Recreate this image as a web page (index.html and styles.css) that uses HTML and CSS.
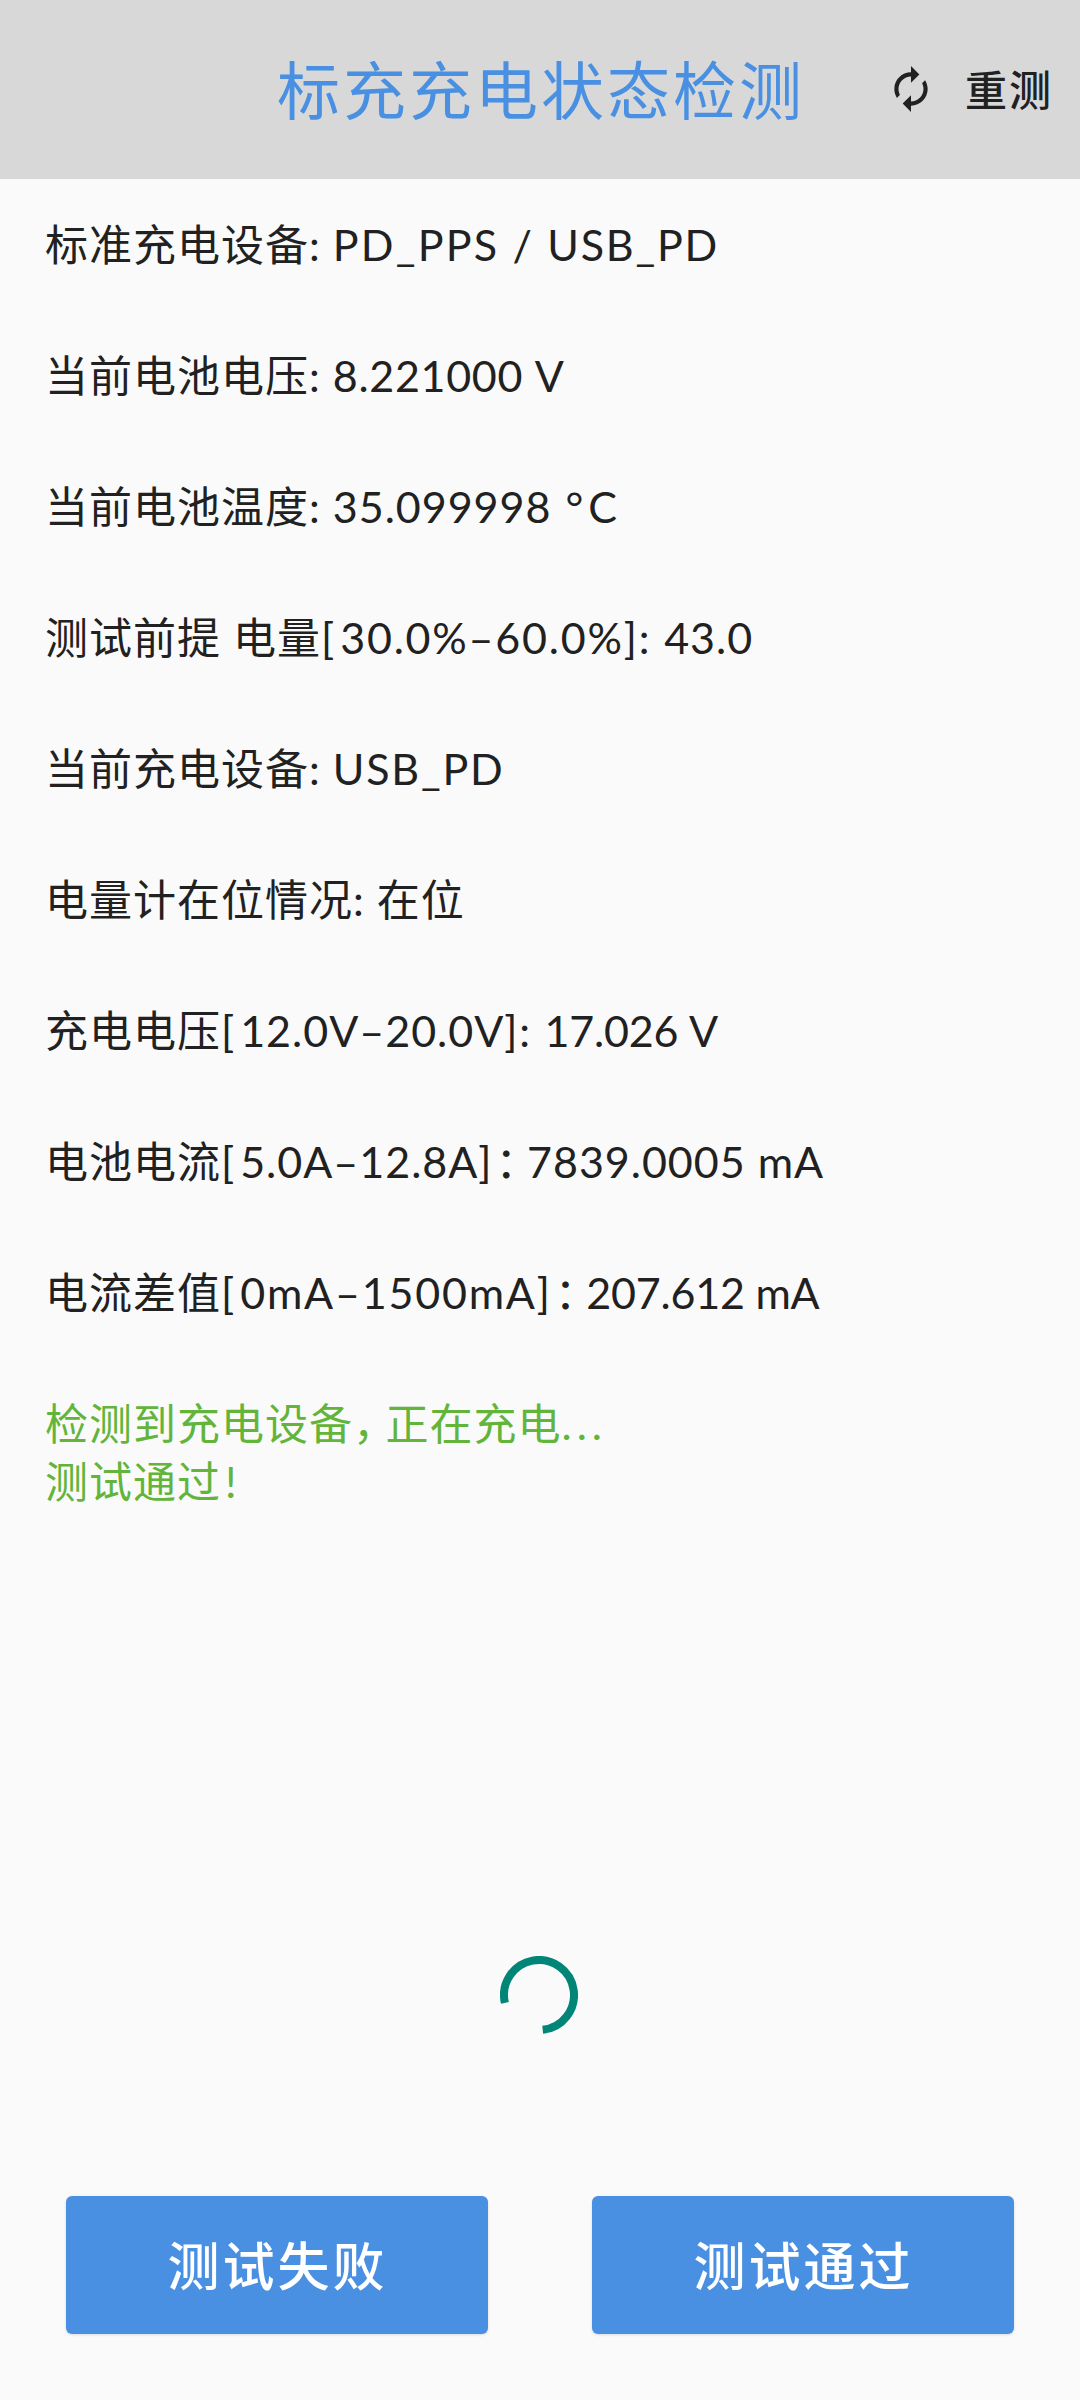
FILE: index.html
```html
<!DOCTYPE html>
<html lang="zh-CN">
<head>
  <meta charset="UTF-8">
  <title>标充充电状态检测</title>
  <link rel="stylesheet" href="styles.css">
</head>
<body>
  <header class="header">
    <h1 class="title">标充充电状态检测</h1>
    <button class="retest">
      <svg class="retest-icon" viewBox="0 0 24 24" fill="currentColor">
        <path d="M12 6v3l4-4-4-4v3c-4.42 0-8 3.58-8 8 0 1.57.46 3.03 1.24 4.26L6.7 14.8c-.45-.83-.7-1.79-.7-2.8 0-3.31 2.69-6 6-6zm6.76 1.74L17.3 9.2c.44.84.7 1.79.7 2.8 0 3.31-2.69 6-6 6v-3l-4 4 4 4v-3c4.42 0 8-3.58 8-8 0-1.57-.46-3.03-1.24-4.26z"/>
      </svg>
      <span>重测</span>
    </button>
  </header>

  <main class="content">
    <p class="row">标准充电设备: <span class="wider">PD_PPS / </span><span class="wide">USB_PD</span></p>
    <p class="row">当前电池电压: <span class="snug">8.221000 V</span></p>
    <p class="row">当前电池温度: 35.099998 <span class="unit">°C</span></p>
    <p class="row">测试前提 电量<span class="bracket">[</span><span class="wide">30.0%–60.0%]: </span>43.0</p>
    <p class="row">当前充电设备: <span class="wide">USB_PD</span></p>
    <p class="row">电量计在位情况: 在位</p>
    <p class="row">充电电压<span class="bracket">[</span>12.0V–20.0V<span class="wide">]: </span><span class="tight">17.026 V</span></p>
    <p class="row">电池电流<span class="bracket">[</span>5.0A–12.8A]<span class="colon">：</span>7839.0005 mA</p>
    <p class="row">电流差值<span class="bracket">[</span><span class="wide">0mA–1500mA]</span><span class="colon">：</span><span class="tight">207.612 mA</span></p>
    <p class="result">检测到充电设备<span class="comma">，</span>正在充电<span class="dots">...</span><br>测试通过<span class="bang">!</span></p>
  </main>

  <div class="loading">
    <svg class="spinner" viewBox="0 0 78 78">
      <path d="M4.9 46.9A35 35 0 1 1 42.7 73.8"/>
    </svg>
  </div>

  <footer class="actions">
    <button class="btn">测试失败</button>
    <button class="btn">测试通过</button>
  </footer>
</body>
</html>
```

FILE: styles.css
```css
* {
  box-sizing: border-box;
}

body {
  margin: 0;
  width: 1080px;
  height: 2400px;
  display: flex;
  flex-direction: column;
  background-color: #fafafa;
  color: #212121;
  font-family: Lato, "Noto Sans CJK SC", sans-serif;
}

button {
  border: none;
  font-family: inherit;
  font-weight: 500;
}

.header {
  display: grid;
  grid-template-columns: 1fr auto 1fr;
  align-items: center;
  height: 179px;
  padding: 0 0 4px 2px;
  background-color: #d8d8d8;
}

.title {
  grid-column: 2;
  margin: 0;
  padding-bottom: 2px;
  font-size: 63px;
  font-weight: 400;
  letter-spacing: 3px;
  color: #4a90e2;
}

.retest {
  justify-self: end;
  display: flex;
  align-items: center;
  gap: 29px;
  padding: 0 27px 0 0;
  background: none;
  color: #212121;
  font-size: 42px;
  letter-spacing: 2px;
}

.retest-icon {
  width: 50px;
  height: 50px;
  margin-top: 3px;
}

.content {
  height: 1731px;
  padding: 37px 45px 0;
  font-size: 43px;
  letter-spacing: 1px;
  line-height: 58px;
}

.row {
  margin: 0 0 73px;
  white-space: nowrap;
}

.tight {
  letter-spacing: -0.2px;
}

.snug {
  letter-spacing: 0.7px;
}

.wide {
  letter-spacing: 1.8px;
}

.wider {
  letter-spacing: 2.2px;
}

.bracket {
  letter-spacing: 6px;
}

.unit {
  padding-left: 2px;
  letter-spacing: 5px;
}

/* half-width forms of the full-width punctuation */
.colon,
.comma {
  font-feature-settings: "halt";
}

.colon {
  padding: 0 9px 0 3px;
}

.comma {
  padding-right: 10px;
}

.dots {
  letter-spacing: 5px;
}

.bang {
  padding-left: 4px;
}

.result {
  margin: 0;
  color: #62b53a;
}

.loading {
  display: flex;
  justify-content: center;
  height: 286px;
  padding: 46px 2px 0 0;
}

.spinner {
  width: 78px;
  height: 78px;
  fill: none;
  stroke: #008577;
  stroke-width: 8;
}

.actions {
  display: flex;
  justify-content: space-between;
  padding: 0 66px;
}

.btn {
  width: 422px;
  height: 138px;
  padding: 0 0 3px 1px;
  border-radius: 6px;
  background-color: #4a90e2;
  color: #fff;
  font-size: 52px;
  letter-spacing: 3px;
  box-shadow: 0 1px 3px rgba(0, 0, 0, 0.12);
}
```
